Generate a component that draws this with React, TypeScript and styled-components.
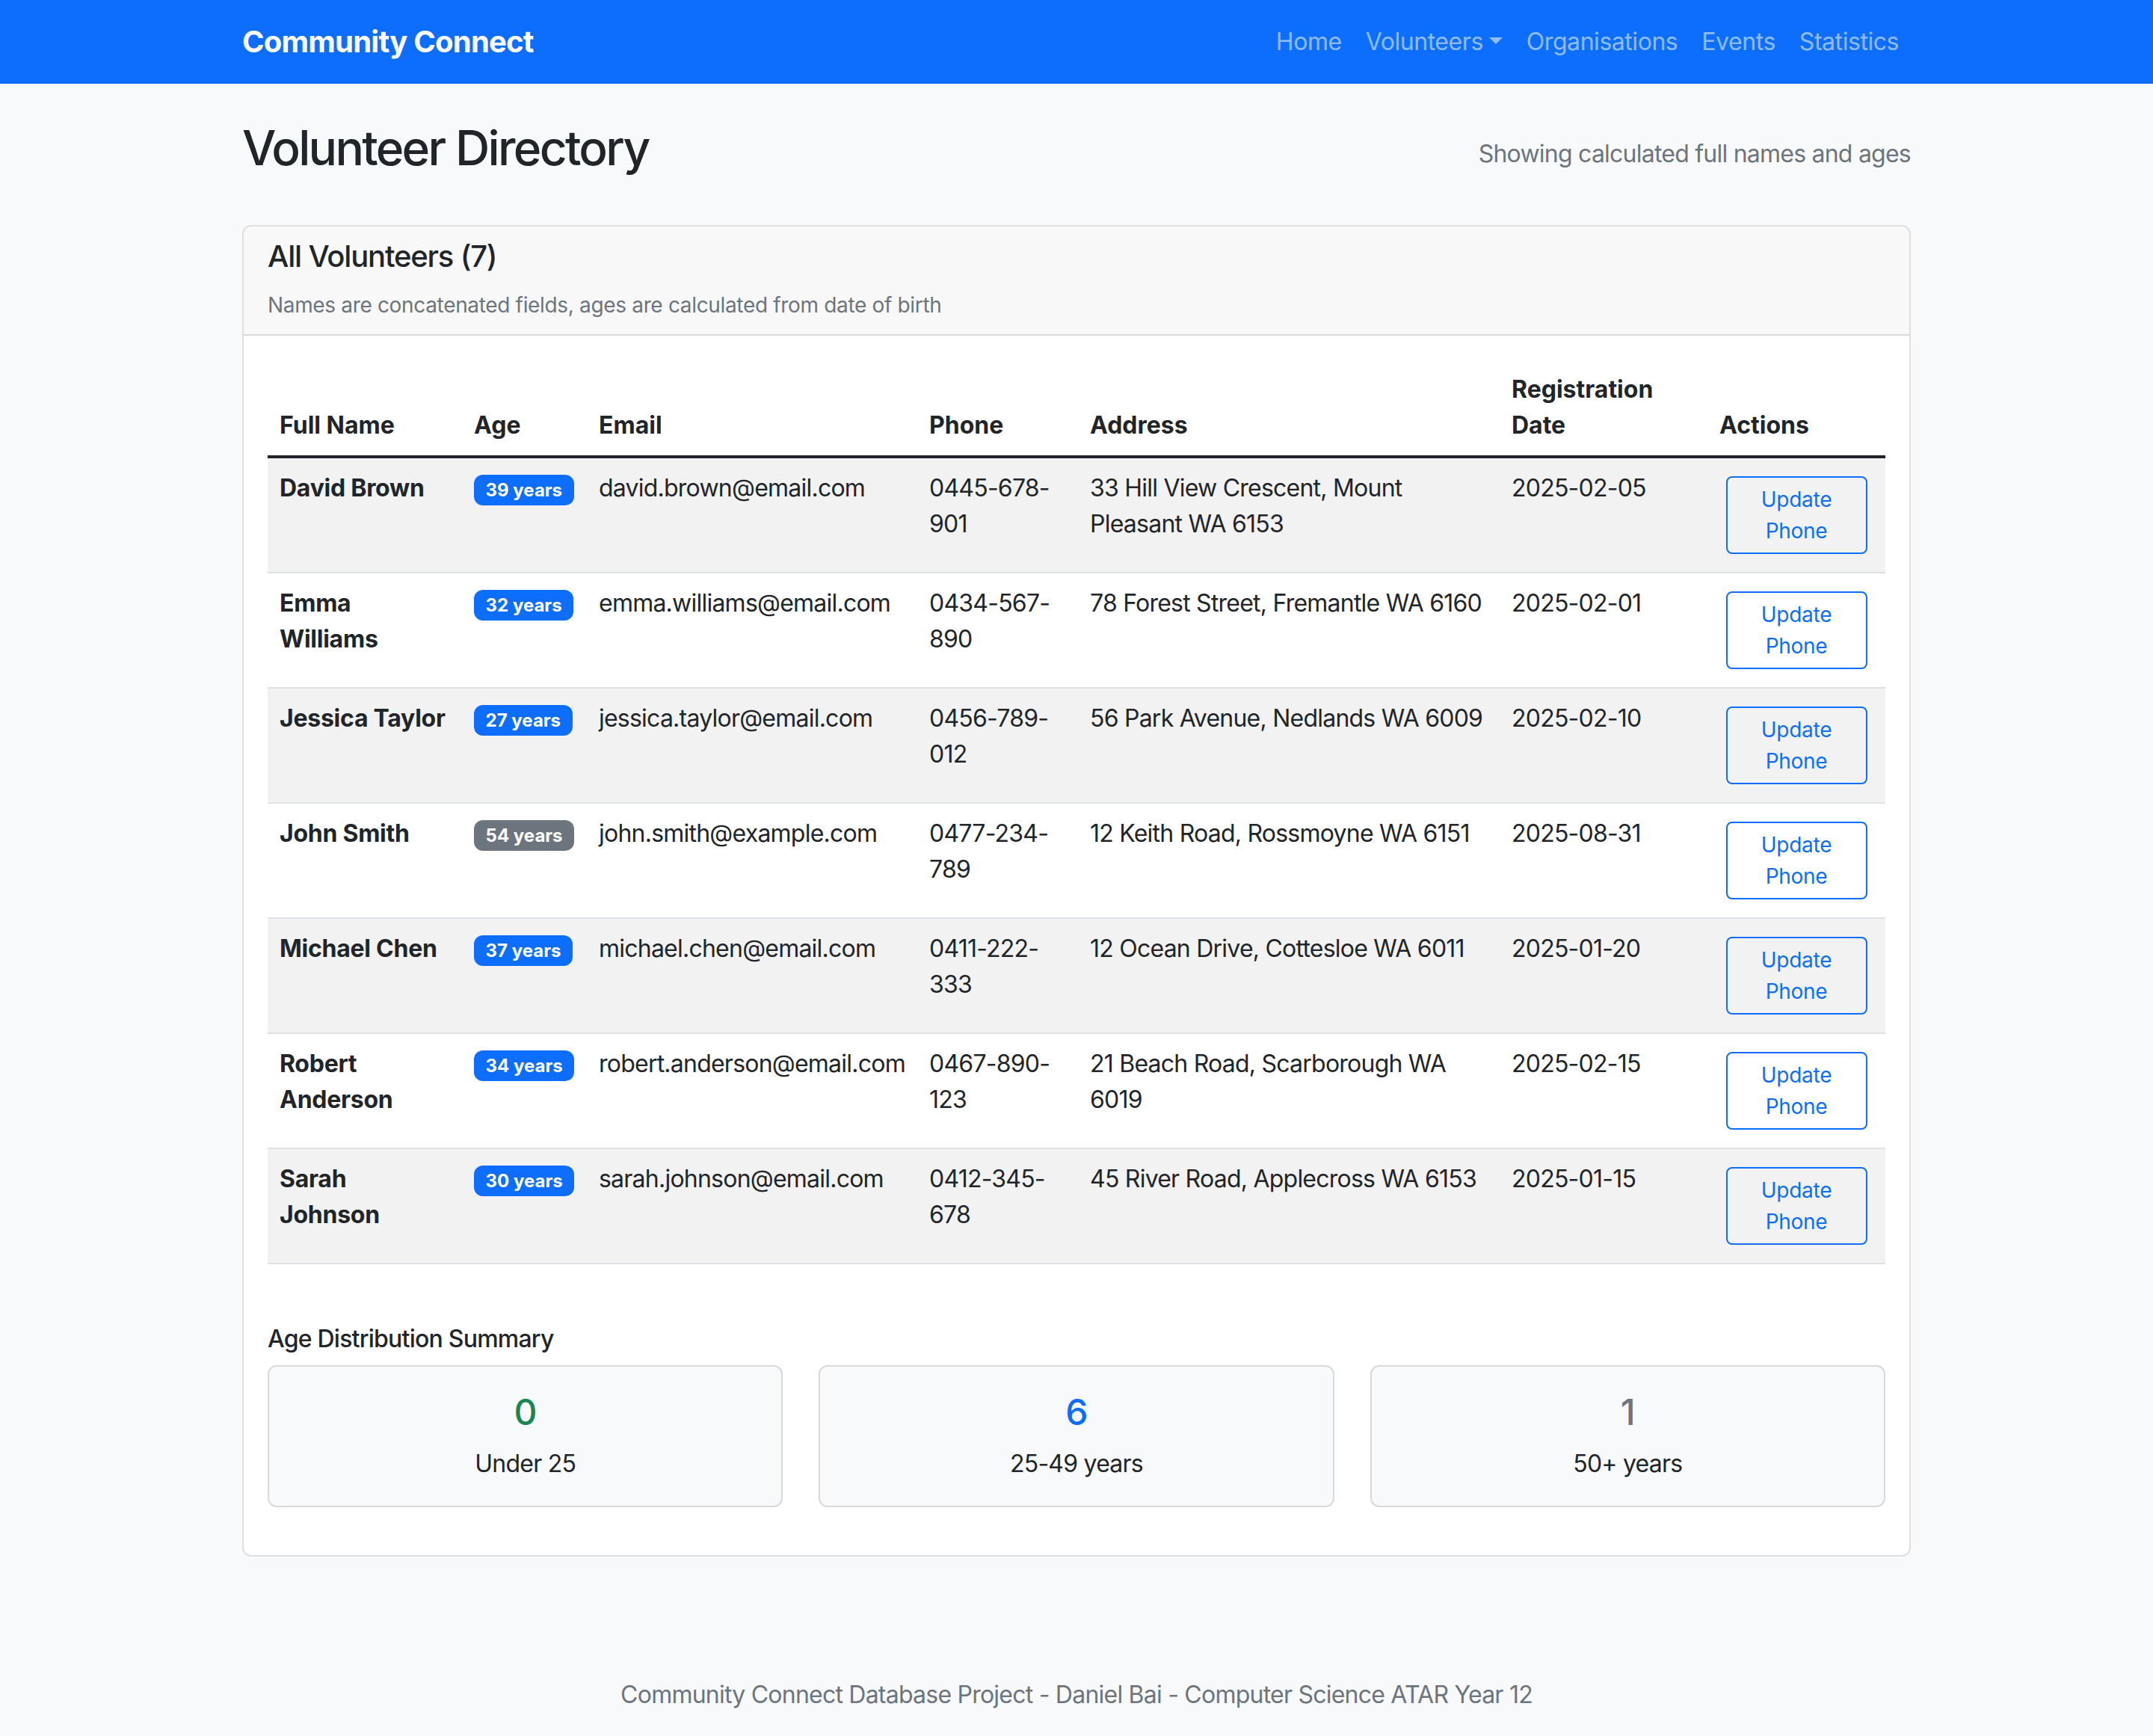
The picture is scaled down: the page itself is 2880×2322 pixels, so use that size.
import styled, { createGlobalStyle } from "styled-components";

const GlobalStyle = createGlobalStyle`
  * {
    box-sizing: border-box;
  }
  body {
    margin: 0;
    background: #f8f9fa;
    color: #212529;
    font-family: Inter, "Liberation Sans", Arial, sans-serif;
    font-size: 32px;
    line-height: 1.5;
    letter-spacing: -0.024em;
  }
`;

const Navbar = styled.nav`
  background: #0d6efd;
  padding: 16px 0;
`;

const Container = styled.div`
  width: 2232px;
  margin: 0 auto;
`;

const NavInner = styled(Container)`
  display: flex;
  justify-content: space-between;
  align-items: center;
`;

const Brand = styled.a`
  font-size: 40px;
  font-weight: 700;
  color: #fff;
  padding: 10px 0;
  line-height: 1.5;
  text-decoration: none;
`;

const NavList = styled.ul`
  display: flex;
  list-style: none;
  margin: 0;
  padding: 0;
`;

const NavLink = styled.a<{ $dropdown?: boolean }>`
  display: block;
  padding: 16px;
  color: rgba(255, 255, 255, 0.55);
  letter-spacing: -0.014em;
  text-decoration: none;

  ${({ $dropdown }) =>
    $dropdown &&
    `
    &::after {
      content: "";
      display: inline-block;
      margin-left: 8px;
      vertical-align: 8px;
      border-top: 9.6px solid;
      border-right: 9.6px solid transparent;
      border-left: 9.6px solid transparent;
      border-bottom: 0;
    }
  `}
`;

const Main = styled(Container)`
  padding-top: 48px;
`;

const PageHeader = styled.div`
  display: flex;
  justify-content: space-between;
  align-items: center;
  margin-bottom: 48px;
`;

const PageTitle = styled.h2`
  font-size: 64px;
  font-weight: 500;
  line-height: 1.2;
  letter-spacing: -0.042em;
  margin: 0 0 16px;
`;

const Muted = styled.span`
  color: #6c757d;
`;

const Card = styled.div`
  background: #fff;
  border: 2px solid rgba(0, 0, 0, 0.125);
  border-radius: 12px;
  overflow: hidden;
`;

const CardHeader = styled.div`
  background: rgba(33, 37, 41, 0.03);
  border-bottom: 2px solid rgba(0, 0, 0, 0.125);
  padding: 16px 32px 18px;
`;

const CardTitle = styled.h5`
  font-size: 40px;
  font-weight: 500;
  line-height: 1.2;
  letter-spacing: -0.03em;
  margin: 0 0 20px;
`;

const SmallMuted = styled.div`
  font-size: 28px;
  line-height: 1.5;
  letter-spacing: -0.012em;
  color: #6c757d;
`;

const CardBody = styled.div`
  padding: 32px;
`;

const Table = styled.table`
  width: 100%;
  border-collapse: collapse;
  table-layout: fixed;
  margin: 0;
`;

const Th = styled.th`
  padding: 16px;
  text-align: left;
  vertical-align: bottom;
  font-weight: 700;
  letter-spacing: 0;
  border-bottom: 4px solid #212529;
`;

const Row = styled.tr`
  &:nth-child(odd) {
    background: #f2f2f2;
  }
`;

const Td = styled.td<{ $bold?: boolean; $center?: boolean }>`
  padding: 16px;
  vertical-align: top;
  border-bottom: 2px solid #dee2e6;
  font-weight: ${({ $bold }) => ($bold ? 700 : 400)};
  letter-spacing: ${({ $bold }) => ($bold ? "-0.008em" : "-0.024em")};
  text-align: ${({ $center }) => ($center ? "center" : "left")};
`;

const Badge = styled.span<{ $bg: string }>`
  display: inline-block;
  padding: 8.4px 15.6px;
  font-size: 24px;
  font-weight: 700;
  line-height: 1;
  letter-spacing: 0;
  color: #fff;
  background: ${({ $bg }) => $bg};
  border-radius: 12px;
  white-space: nowrap;
`;

const OutlineButton = styled.button`
  display: block;
  width: 189px;
  margin: 8px auto;
  padding: 8px 16px;
  font-family: inherit;
  font-size: 28px;
  line-height: 1.5;
  letter-spacing: -0.01em;
  color: #0d6efd;
  background: transparent;
  border: 2px solid #0d6efd;
  border-radius: 8px;
`;

const SummaryTitle = styled.h6`
  font-size: 32px;
  font-weight: 500;
  line-height: 1.2;
  margin: 81px 0 16px;
`;

const StatGrid = styled.div`
  display: grid;
  grid-template-columns: repeat(3, 1fr);
  gap: 48px;
  margin-bottom: 32px;
`;

const StatCard = styled.div`
  background: #f8f9fa;
  border: 2px solid rgba(0, 0, 0, 0.125);
  border-radius: 12px;
  padding: 32px;
  text-align: center;
`;

const StatNumber = styled.h4<{ $color: string }>`
  font-size: 48px;
  font-weight: 500;
  line-height: 1.2;
  margin: 0 0 16px;
  color: ${({ $color }) => $color};
`;

const StatLabel = styled.p`
  margin: 0;
`;

const Footer = styled.footer`
  margin-top: 129px;
  padding: 32px 0;
  text-align: center;
  color: #6c757d;
`;

const columns = [
  { label: "Full Name", width: 260 },
  { label: "Age", width: 167 },
  { label: "Email", width: 442 },
  { label: "Phone", width: 215 },
  { label: "Address", width: 564 },
  { label: "Registration Date", width: 278 },
  { label: "Actions", width: 238 },
];

const volunteers = [
  { name: "David Brown", age: 39, email: "david.brown@email.com", phone: "0445-678-901", address: "33 Hill View Crescent, Mount Pleasant WA 6153", date: "2025-02-05" },
  { name: "Emma Williams", age: 32, email: "emma.williams@email.com", phone: "0434-567-890", address: "78 Forest Street, Fremantle WA 6160", date: "2025-02-01" },
  { name: "Jessica Taylor", age: 27, email: "jessica.taylor@email.com", phone: "0456-789-012", address: "56 Park Avenue, Nedlands WA 6009", date: "2025-02-10" },
  { name: "John Smith", age: 54, email: "john.smith@example.com", phone: "0477-234-789", address: "12 Keith Road, Rossmoyne WA 6151", date: "2025-08-31" },
  { name: "Michael Chen", age: 37, email: "michael.chen@email.com", phone: "0411-222-333", address: "12 Ocean Drive, Cottesloe WA 6011", date: "2025-01-20" },
  { name: "Robert Anderson", age: 34, email: "robert.anderson@email.com", phone: "0467-890-123", address: "21 Beach Road, Scarborough WA 6019", date: "2025-02-15" },
  { name: "Sarah Johnson", age: 30, email: "sarah.johnson@email.com", phone: "0412-345-678", address: "45 River Road, Applecross WA 6153", date: "2025-01-15" },
];

const stats = [
  { value: 0, label: "Under 25", color: "#198754" },
  { value: 6, label: "25-49 years", color: "#0d6efd" },
  { value: 1, label: "50+ years", color: "#6c757d" },
];

const App = () => {
  return (
    <>
      <GlobalStyle />
      <Navbar>
        <NavInner>
          <Brand href="#">Community Connect</Brand>
          <NavList>
            <li><NavLink href="#">Home</NavLink></li>
            <li><NavLink href="#" $dropdown>Volunteers</NavLink></li>
            <li><NavLink href="#">Organisations</NavLink></li>
            <li><NavLink href="#">Events</NavLink></li>
            <li><NavLink href="#">Statistics</NavLink></li>
          </NavList>
        </NavInner>
      </Navbar>

      <Main>
        <PageHeader>
          <PageTitle>Volunteer Directory</PageTitle>
          <Muted>Showing calculated full names and ages</Muted>
        </PageHeader>

        <Card>
          <CardHeader>
            <CardTitle>All Volunteers (7)</CardTitle>
            <SmallMuted>Names are concatenated fields, ages are calculated from date of birth</SmallMuted>
          </CardHeader>
          <CardBody>
            <Table>
              <colgroup>
                {columns.map((c) => (
                  <col key={c.label} style={{ width: c.width }} />
                ))}
              </colgroup>
              <thead>
                <tr>
                  {columns.map((c) => (
                    <Th key={c.label}>{c.label}</Th>
                  ))}
                </tr>
              </thead>
              <tbody>
                {volunteers.map((v) => (
                  <Row key={v.email}>
                    <Td $bold>{v.name}</Td>
                    <Td>
                      <Badge $bg={v.age >= 50 ? "#6c757d" : "#0d6efd"}>{v.age} years</Badge>
                    </Td>
                    <Td>{v.email}</Td>
                    <Td>{v.phone}</Td>
                    <Td>{v.address}</Td>
                    <Td>{v.date}</Td>
                    <Td $center>
                      <OutlineButton type="button">Update Phone</OutlineButton>
                    </Td>
                  </Row>
                ))}
              </tbody>
            </Table>

            <SummaryTitle>Age Distribution Summary</SummaryTitle>
            <StatGrid>
              {stats.map((s) => (
                <StatCard key={s.label}>
                  <StatNumber $color={s.color}>{s.value}</StatNumber>
                  <StatLabel>{s.label}</StatLabel>
                </StatCard>
              ))}
            </StatGrid>
          </CardBody>
        </Card>
      </Main>

      <Footer>Community Connect Database Project - Daniel Bai - Computer Science ATAR Year 12</Footer>
    </>
  );
};

export default App;
